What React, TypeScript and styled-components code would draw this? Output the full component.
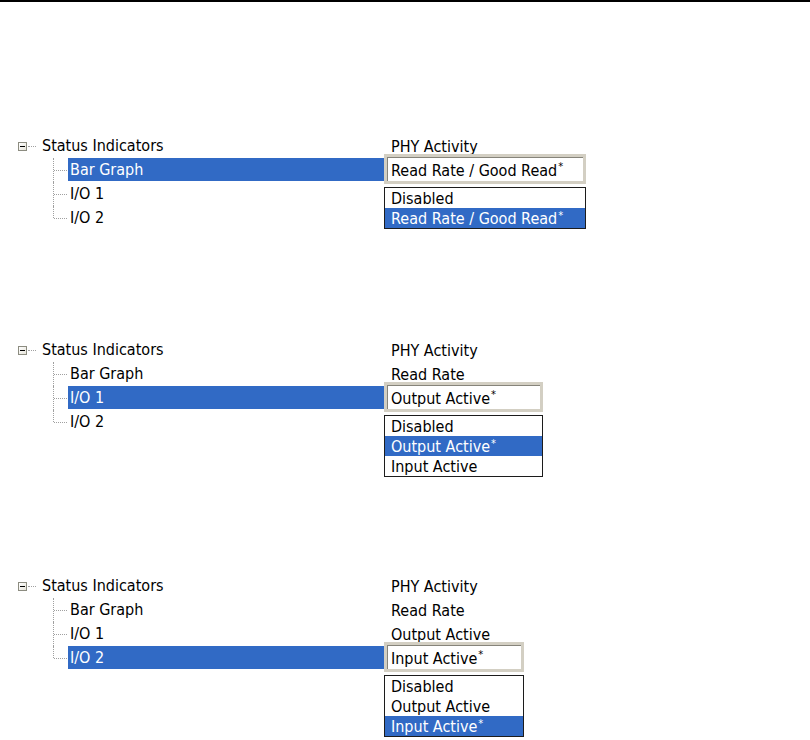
import React from "react";
import styled, { createGlobalStyle } from "styled-components";

const Global = createGlobalStyle`
  html, body { margin: 0; padding: 0; background: #ffffff; }
  body { font-family: "DejaVu Sans Condensed", "DejaVu Sans", sans-serif; font-size: 16px; color: #000; }
`;

const Page = styled.div`
  width: 810px;
  height: 740px;
  overflow: hidden;
  display: flex;
  flex-direction: column;
`;

const TopRule = styled.div`
  height: 0;
  border-top: 2px solid #000;
`;

const Panel = styled.div<{ $top: number }>`
  margin-top: ${(p) => p.$top}px;
  display: flex;
  flex-direction: column;
`;

const Row = styled.div`
  display: flex;
  height: 24px;
  align-items: stretch;
`;

const TreeCell = styled.div<{ $indent: number }>`
  width: 384px;
  flex: none;
  display: flex;
  align-items: stretch;
  padding-left: ${(p) => p.$indent}px;
  box-sizing: border-box;
`;

const Expander = styled.div`
  align-self: center;
  width: 9px;
  height: 9px;
  box-sizing: border-box;
  border: 1px solid #8c8c80;
  background: linear-gradient(135deg, #ffffff 0%, #e6e4da 100%);
  display: flex;
  align-items: center;
  justify-content: center;
  &::after {
    content: "";
    width: 5px;
    height: 1px;
    background: #000;
  }
`;

const RootDots = styled.div`
  align-self: center;
  width: 8px;
  margin-left: 1px;
  border-top: 1px dotted #a0a0a0;
`;

const Connector = styled.div<{ $last: boolean }>`
  width: 14px;
  flex: none;
  position: relative;
  &::before {
    content: "";
    position: absolute;
    left: 0;
    top: 0;
    height: ${(p) => (p.$last ? "12px" : "24px")};
    border-left: 1px dotted #a0a0a0;
  }
  &::after {
    content: "";
    position: absolute;
    left: 1px;
    right: 0;
    top: 12px;
    border-top: 1px dotted #a0a0a0;
  }
`;

const Label = styled.div<{ $selected?: boolean; $root?: boolean }>`
  display: flex;
  align-items: center;
  margin-left: ${(p) => (p.$root ? "4px" : "1px")};
  padding: 0 2px;
  margin-bottom: 1px;
  white-space: nowrap;
  flex: ${(p) => (p.$selected ? "1" : "none")};
  background: ${(p) => (p.$selected ? "#316ac5" : "transparent")};
  color: ${(p) => (p.$selected ? "#ffffff" : "#000000")};
`;

const ValueCell = styled.div`
  flex: 1;
  display: flex;
  align-items: center;
  padding-left: 7px;
  white-space: nowrap;
`;

const EditCell = styled.div`
  flex: 1;
  display: flex;
  align-items: flex-start;
`;

const EditBox = styled.div<{ $width: number }>`
  position: relative;
  width: ${(p) => p.$width}px;
  height: 30px;
  margin-top: -4px;
  box-sizing: border-box;
  border: 3px solid #d3cfc3;
  box-shadow: inset 1px 1px 0 #86847a;
  background: #fff;
  display: flex;
  align-items: center;
  padding-left: 4px;
  padding-top: 2px;
  white-space: nowrap;
`;

const DropList = styled.div`
  position: absolute;
  left: -3px;
  right: -3px;
  top: calc(100% + 6px);
  border: 1px solid #1c1c1c;
  background: #fff;
  display: flex;
  flex-direction: column;
`;

const DropItem = styled.div<{ $selected?: boolean }>`
  height: 20px;
  display: flex;
  align-items: center;
  padding-left: 6px;
  white-space: nowrap;
  background: ${(p) => (p.$selected ? "#316ac5" : "transparent")};
  color: ${(p) => (p.$selected ? "#ffffff" : "#000000")};
`;

const Star = styled.span`
  font-size: 11px;
  align-self: flex-start;
  margin-top: 1px;
  margin-left: 1px;
`;

function OptionText({ text }: { text: string }) {
  if (text.endsWith("*")) {
    return (
      <>
        {text.slice(0, -1)}
        <Star>*</Star>
      </>
    );
  }
  return <>{text}</>;
}

type PanelData = {
  top: number;
  selected: number;
  values: string[];
  current: string;
  options: string[];
  width: number;
};

const children = ["Bar Graph", "I/O 1", "I/O 2"];

const panels: PanelData[] = [
  {
    top: 132,
    selected: 0,
    values: ["PHY Activity"],
    current: "Read Rate / Good Read*",
    options: ["Disabled", "Read Rate / Good Read*"],
    width: 202,
  },
  {
    top: 108,
    selected: 1,
    values: ["PHY Activity", "Read Rate"],
    current: "Output Active*",
    options: ["Disabled", "Output Active*", "Input Active"],
    width: 159,
  },
  {
    top: 140,
    selected: 2,
    values: ["PHY Activity", "Read Rate", "Output Active"],
    current: "Input Active*",
    options: ["Disabled", "Output Active", "Input Active*"],
    width: 140,
  },
];

function StatusPanel({ data }: { data: PanelData }) {
  return (
    <Panel $top={data.top}>
      <Row>
        <TreeCell $indent={18}>
          <Expander />
          <RootDots />
          <Label $root>Status Indicators</Label>
        </TreeCell>
        <ValueCell>{data.values[0]}</ValueCell>
      </Row>
      {children.map((name, i) => {
        const sel = i === data.selected;
        return (
          <Row key={name}>
            <TreeCell $indent={53}>
              <Connector $last={i === children.length - 1} />
              <Label $selected={sel}>{name}</Label>
            </TreeCell>
            {sel ? (
              <EditCell>
                <EditBox $width={data.width}>
                  <OptionText text={data.current} />
                  <DropList>
                    {data.options.map((o) => (
                      <DropItem key={o} $selected={o === data.current}>
                        <OptionText text={o} />
                      </DropItem>
                    ))}
                  </DropList>
                </EditBox>
              </EditCell>
            ) : (
              <ValueCell>{i < data.selected ? data.values[i + 1] : ""}</ValueCell>
            )}
          </Row>
        );
      })}
    </Panel>
  );
}

export default function App() {
  return (
    <Page>
      <Global />
      <TopRule />
      {panels.map((p, i) => (
        <StatusPanel key={i} data={p} />
      ))}
    </Page>
  );
}
